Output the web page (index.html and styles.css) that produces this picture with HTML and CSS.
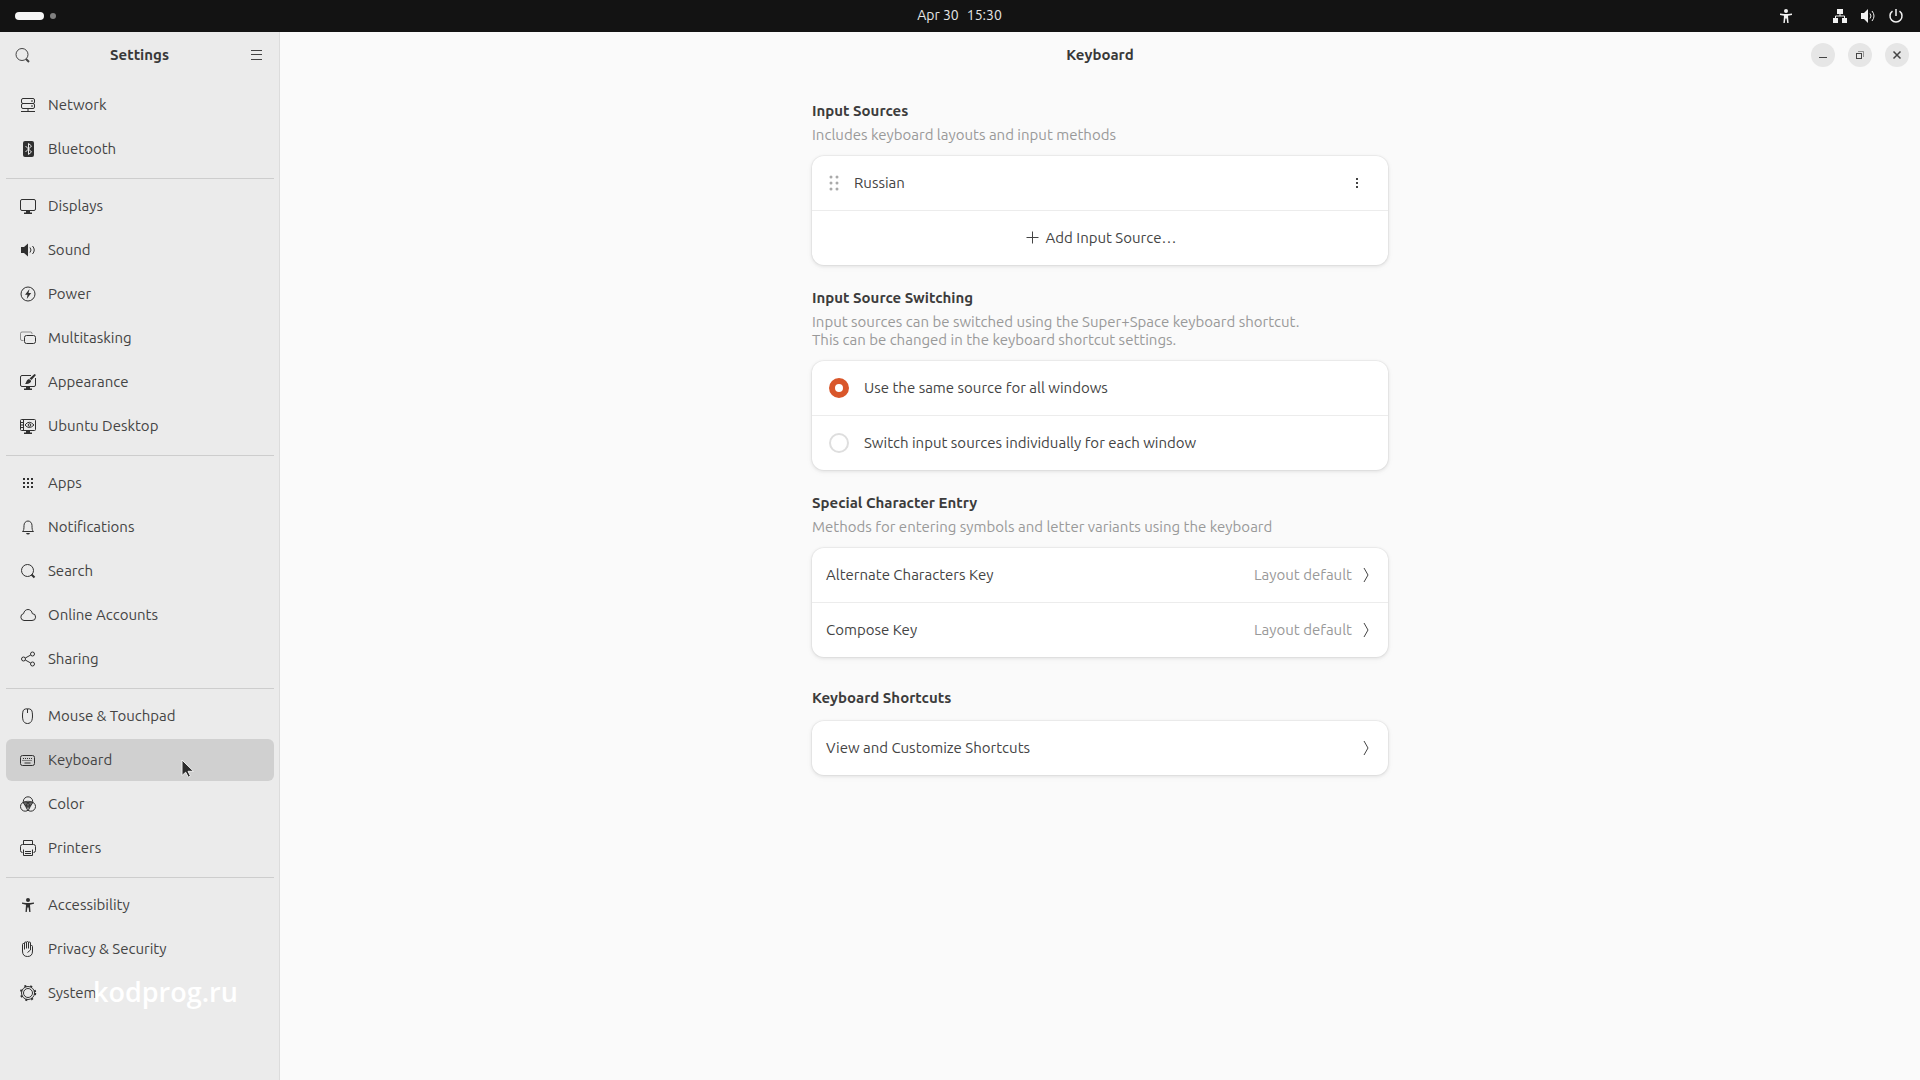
FILE: index.html
```html
<!doctype html>
<html lang="en">
  <head>
    <meta charset="utf-8">
    <title>Settings - Keyboard</title>
    <link rel="stylesheet" href="styles.css">
  </head>
  <body>
    <div class="topbar">
      <div class="workspaces"><span class="workspace-active"></span><span class="workspace-dot"></span></div>
      <div class="clock"><span>Apr 30</span><span>15:30</span></div>
      <div class="status-icons">
        <svg class="icon status-access" viewBox="0 0 16 16"><circle class="fill" cx="8" cy="3" r="2"/><path class="fill" d="M2 5.500l4 .5h4l4-.5v1.400l-4 .8.6 7.300H9.200l-.6-4.500H7.400L6.800 15H5.400L6 7.700l-4-.8z"/></svg>
        <svg class="icon" viewBox="0 0 16 16"><path class="fill" d="M5 1h6v5H5zM1 10h5v5H1zM10 10h5v5h-5z"/><path d="M8 6v2M3.500 10V8h9v2"/></svg>
        <svg class="icon" viewBox="0 0 16 16"><path class="fill" d="M1 5h3l4-4v14l-4-4H1z"/><path d="M10 5.500q2 2.500 0 5M12 3q4 5 0 10"/></svg>
        <svg class="icon power" viewBox="0 0 16 16"><path d="M4.500 3.200a6 6 0 1 0 7 0M8 1v7"/></svg>
      </div>
    </div>

    <div class="window">
      <aside class="sidebar">
        <header class="sidebar-header">
          <button class="flat-button" aria-label="Search"><svg class="icon" viewBox="0 0 16 16"><circle cx="8" cy="7.500" r="6"/><path class="heavy" d="M12 12l3 3"/></svg></button>
          <h1 class="title">Settings</h1>
          <button class="flat-button" aria-label="Menu"><svg class="icon" viewBox="0 0 16 16"><path d="M2 3.500h11M2 7.500h11M2 12.500h11"/></svg></button>
        </header>

        <nav class="nav">
          <ul class="nav-group">
            <li><a class="nav-item" href="#network"><svg class="icon" viewBox="0 0 16 16"><rect x="1.500" y="1.500" width="13" height="5" rx="1.500"/><rect x="1.500" y="6.500" width="13" height="5" rx="1.500"/><path d="M11 4h2M11 9h2M1 14.500h14M8 12v2"/></svg>Network</a></li>
            <li><a class="nav-item" href="#bluetooth"><svg class="icon" viewBox="0 0 16 16"><rect class="fill" x="3" y="0" width="11" height="16" rx="2"/><path class="light" d="M5.500 5l6 6-3 2.500v-11l3 2.500-6 6"/></svg>Bluetooth</a></li>
          </ul>
          <ul class="nav-group">
            <li><a class="nav-item" href="#displays"><svg class="icon" viewBox="0 0 16 16"><rect x=".5" y="1.500" width="15" height="11" rx="1.500"/><path class="fill" d="M6 13h4v1.500h2V16H4v-1.500h2z"/></svg>Displays</a></li>
            <li><a class="nav-item" href="#sound"><svg class="icon" viewBox="0 0 16 16"><path class="fill" d="M1 5h3l4-3.500v13L4 11H1z"/><path d="M10 5.500q2 2.500 0 5M12.500 4q3.500 4 0 8"/></svg>Sound</a></li>
            <li><a class="nav-item" href="#power"><svg class="icon" viewBox="0 0 16 16"><circle cx="8" cy="8" r="7"/><path class="fill" d="M9.500 3L5 8.700h2.500L6.800 13l4.400-6H8.500z"/></svg>Power</a></li>
            <li><a class="nav-item" href="#multitasking"><svg class="icon" viewBox="0 0 16 16"><path class="faint" d="M3.500 10.500H2A1.500 1.500 0 0 1 .5 9V3.500A1.500 1.500 0 0 1 2 2h8.500A1.500 1.500 0 0 1 12 3.500V4"/><rect x="4.500" y="5.500" width="11" height="8" rx="2"/></svg>Multitasking</a></li>
            <li><a class="nav-item" href="#appearance"><svg class="icon" viewBox="0 0 16 16"><path d="M11 1.500H2A1.500 1.500 0 0 0 .5 3v8A1.500 1.500 0 0 0 2 12.500h12a1.500 1.500 0 0 0 1.500-1.500V4"/><path class="fill" d="M14.500 0L16 1l-4.500 5-2-1.500zM9 5l2.200 1.800C11 9 8.500 10.500 5 10c1.500-1 1-4 4-5zM6 13h4v1.500h2V16H4v-1.500h2z"/></svg>Appearance</a></li>
            <li><a class="nav-item" href="#ubuntu-desktop"><svg class="icon" viewBox="0 0 16 16"><rect x=".5" y="1.500" width="15" height="11" rx="1"/><path d="M3.500 2v10M1 4.500h2M1 7h2M1 9.500h2M5 7q4-5.500 9 0-5 5-9 0z"/><circle cx="9.500" cy="7" r="1.300"/><path class="fill" d="M6 13h4v1.500h2V16H4v-1.500h2z"/></svg>Ubuntu Desktop</a></li>
          </ul>
          <ul class="nav-group">
            <li><a class="nav-item" href="#apps"><svg class="icon" viewBox="0 0 16 16"><path class="fill" d="M3 3h2v2H3zM7 3h2v2H7zM11 3h2v2h-2zM3 7h2v2H3zM7 7h2v2H7zM11 7h2v2h-2zM3 11h2v2H3zM7 11h2v2H7zM11 11h2v2h-2z"/></svg>Apps</a></li>
            <li><a class="nav-item" href="#notifications"><svg class="icon" viewBox="0 0 16 16"><path d="M2.500 12.500c1.300-1 1.500-2.500 1.500-6a4 4.500 0 0 1 8 0c0 3.500.2 5 1.500 6z"/><path class="fill" d="M6 14h4q-.5 1.500-2 1.500T6 14z"/></svg>Notifications</a></li>
            <li><a class="nav-item" href="#search"><svg class="icon" viewBox="0 0 16 16"><circle cx="7.500" cy="7.500" r="6"/><path class="heavy" d="M11.500 11.500l3 3"/></svg>Search</a></li>
            <li><a class="nav-item" href="#online-accounts"><svg class="icon" viewBox="0 0 16 16"><path d="M4 13.500a3.500 3.500 0 0 1-.4-6.900C4 4.200 5.800 2.500 8 2.500s4 1.700 4.300 4.100A3.400 3.400 0 0 1 12 13.500z"/></svg>Online Accounts</a></li>
            <li><a class="nav-item" href="#sharing"><svg class="icon" viewBox="0 0 16 16"><circle cx="3.500" cy="8" r="2"/><circle cx="12.500" cy="3" r="2"/><circle cx="12.500" cy="13" r="2"/><path d="M5.300 7l5.400-3M5.300 9l5.400 3"/></svg>Sharing</a></li>
          </ul>
          <ul class="nav-group">
            <li><a class="nav-item" href="#mouse"><svg class="icon" viewBox="0 0 16 16"><path d="M7.500.8c3.500 0 4.500 1 4.800 4 .7 6-.3 10.700-4.800 10.700S2 10.800 2.700 4.800c.3-3 1.300-4 4.800-4zM7.500 1v4"/></svg>Mouse &amp; Touchpad</a></li>
            <li class="nav-current"><a class="nav-item active" href="#keyboard"><svg class="icon" viewBox="0 0 16 16"><rect x=".5" y="3.500" width="14" height="10" rx="2"/><path class="keys" d="M3 6.500h10M2.500 8.500h10"/><path d="M4.500 11h6"/></svg>Keyboard</a>
              <svg class="cursor" viewBox="0 0 14 20"><path d="M1 1v15.500l3.700-3.300 2.600 5 2.200-1.100-2.500-4.800H12.500z"/></svg>
            </li>
            <li><a class="nav-item" href="#color"><svg class="icon" viewBox="0 0 16 16"><path class="fill soft" d="M3.500 6q4.500-2.500 9 0-.5 5-4.500 7-4-2-4.500-7z"/><circle cx="8" cy="5.500" r="4.700"/><circle cx="5.200" cy="10.500" r="4.700"/><circle cx="10.800" cy="10.500" r="4.700"/></svg>Color</a></li>
            <li><a class="nav-item" href="#printers"><svg class="icon" viewBox="0 0 16 16"><path d="M3.500 4.500v-4h9v4M2.500 12.500Q.5 12.500.5 10.500v-4q0-2 2-2h11q2 0 2 2v4q0 2-2 2M3.500 9.500v6h9v-6M5 11.500h6M5 13.500h6"/></svg>Printers</a></li>
          </ul>
          <ul class="nav-group">
            <li><a class="nav-item" href="#accessibility"><svg class="icon" viewBox="0 0 16 16"><circle class="fill" cx="8" cy="3" r="2"/><path class="fill" d="M2 5.500l4 .5h4l4-.5v1.300l-4 1 .5 7.200H9.200l-.6-4.500H7.400L6.800 15H5.500L6 7.800l-4-1z"/></svg>Accessibility</a></li>
            <li><a class="nav-item" href="#privacy"><svg class="icon" viewBox="0 0 16 16"><path d="M4.500 8.500V3.500q0-1-1-1t-1 1V10q0 5.500 5 5.500t5-5.500V5.500q0-1-1-1t-1 1V9M4.500 7.500V2q0-1 1-1t1 1v5.500M6.500 7V1.500q0-1 1-1t1 1V7M8.500 7.500V2q0-1 1-1t1 1v5.500M10.500 9l-3 2.500"/></svg>Privacy &amp; Security</a></li>
            <li class="nav-current"><a class="nav-item" href="#system"><svg class="icon" viewBox="0 0 16 16"><circle cx="8" cy="8" r="6.500"/><circle cx="8" cy="8" r="4.500"/><circle class="teeth" cx="8" cy="8" r="7.200"/></svg>System</a>
              <span class="watermark">kodprog.ru</span>
            </li>
          </ul>
        </nav>
      </aside>

      <main class="content">
        <header class="content-header">
          <h2 class="title">Keyboard</h2>
          <div class="window-controls">
            <button aria-label="Minimize"><svg class="icon" viewBox="0 0 16 16"><path d="M4 10.500h8"/></svg></button>
            <button aria-label="Restore"><svg class="icon" viewBox="0 0 16 16"><rect x="4.500" y="6.500" width="5" height="5"/><path class="faint" d="M6 4.500h5.500V10"/></svg></button>
            <button aria-label="Close"><svg class="icon close" viewBox="0 0 16 16"><path d="M4.500 4.500l7 7M11.500 4.500l-7 7"/></svg></button>
          </div>
        </header>

        <div class="page">
          <section class="group">
            <h3>Input Sources</h3>
            <p>Includes keyboard layouts and input methods</p>
            <div class="card">
              <div class="row source-row">
                <svg class="icon handle" viewBox="0 0 16 16"><circle cx="5" cy="2" r="1.500"/><circle cx="11" cy="2" r="1.500"/><circle cx="5" cy="8" r="1.500"/><circle cx="11" cy="8" r="1.500"/><circle cx="5" cy="14" r="1.500"/><circle cx="11" cy="14" r="1.500"/></svg>
                <span class="row-label">Russian</span>
                <button class="flat-button" aria-label="Source options"><svg class="icon" viewBox="0 0 16 16"><path class="fill" d="M7 3h2v2H7zM7 7h2v2H7zM7 11h2v2H7z"/></svg></button>
              </div>
              <button class="row add-row"><svg class="icon" viewBox="0 0 16 16"><path d="M8.500 1.500v12M2.500 7.500h12"/></svg>Add Input Source…</button>
            </div>
          </section>

          <section class="group">
            <h3>Input Source Switching</h3>
            <p>Input sources can be switched using the Super+Space keyboard shortcut.<br>This can be changed in the keyboard shortcut settings.</p>
            <div class="card">
              <label class="row radio-row"><input type="radio" name="switching" checked>Use the same source for all windows</label>
              <label class="row radio-row"><input type="radio" name="switching">Switch input sources individually for each window</label>
            </div>
          </section>

          <section class="group">
            <h3>Special Character Entry</h3>
            <p>Methods for entering symbols and letter variants using the keyboard</p>
            <div class="card">
              <a class="row" href="#alternate"><span class="row-label">Alternate Characters Key</span><span class="row-value">Layout default</span><svg class="icon chevron" viewBox="0 0 16 16"><path d="M6 1l4 7-4 7"/></svg></a>
              <a class="row" href="#compose"><span class="row-label">Compose Key</span><span class="row-value">Layout default</span><svg class="icon chevron" viewBox="0 0 16 16"><path d="M6 1l4 7-4 7"/></svg></a>
            </div>
          </section>

          <section class="group shortcuts">
            <h3>Keyboard Shortcuts</h3>
            <div class="card">
              <a class="row" href="#shortcuts"><span class="row-label">View and Customize Shortcuts</span><svg class="icon chevron" viewBox="0 0 16 16"><path d="M6 1l4 7-4 7"/></svg></a>
            </div>
          </section>
        </div>
      </main>
    </div>
  </body>
</html>
```
FILE: styles.css
```css
* {
  box-sizing: border-box;
}
body {
  margin: 0;
  min-height: 100vh;
  display: flex;
  flex-direction: column;
  font-family: Ubuntu, "Noto Sans", sans-serif;
  font-size: 15px;
  line-height: 18px;
  color: #444;
  background-color: #fafafa;
}
h1, h2, h3, p, ul {
  margin: 0;
  padding: 0;
}
ul {
  list-style: none;
}
a {
  color: inherit;
  text-decoration: none;
}
button {
  border: none;
  padding: 0;
  background: none;
  font: inherit;
  color: inherit;
}
.icon {
  width: 16px;
  height: 16px;
  flex: none;
  display: block;
  overflow: visible;
  fill: none;
  stroke: currentColor;
  stroke-width: 1;
}
.icon .fill {
  fill: currentColor;
  stroke: none;
}
.icon .light {
  stroke: #ebebeb;
}
.icon .faint {
  opacity: 0.5;
}
.icon .soft {
  opacity: 0.7;
}
.icon .heavy {
  stroke-width: 2;
}
.icon .keys {
  stroke-dasharray: 1 1;
}
.icon .teeth {
  stroke-width: 2;
  stroke-dasharray: 2 4;
}

/* top bar */
.topbar {
  height: 32px;
  padding: 0 16px 0 15px;
  display: grid;
  grid-template-columns: 1fr auto 1fr;
  align-items: center;
  font-size: 14px;
  background-color: #131313;
  color: #e6e6e6;
}
.workspaces {
  display: flex;
  align-items: center;
  gap: 6px;
}
.workspace-active {
  width: 29px;
  height: 8px;
  border-radius: 4px;
  background-color: #f6f6f6;
}
.workspace-dot {
  width: 6px;
  height: 6px;
  border-radius: 50%;
  background-color: #808080;
}
.clock {
  padding-bottom: 2px;
  display: flex;
  gap: 8px;
}
.status-icons {
  display: flex;
  justify-content: flex-end;
  gap: 12px;
  color: #f2f2f2;
}
.status-access {
  margin-right: 26px;
}
.power {
  stroke-width: 1.500;
}

/* window */
.window {
  flex: 1;
  display: flex;
}
.sidebar {
  flex: 0 0 280px;
  border-right: 1px solid #dcdcdc;
  background-color: #ebebeb;
}
.sidebar-header {
  height: 46px;
  padding: 0 14px;
  display: flex;
  align-items: center;
  justify-content: space-between;
}
.title {
  font-size: 15px;
  font-weight: bold;
  color: #383838;
}
.nav {
  padding: 6px 5px 6px 6px;
}
.nav-group {
  display: flex;
  flex-direction: column;
  gap: 2px;
}
.nav-group + .nav-group {
  margin-top: 8px;
  padding-top: 6px;
  border-top: 1px solid #cdcdcd;
}
.nav-item {
  height: 42px;
  padding-left: 14px;
  display: flex;
  align-items: center;
  gap: 12px;
  border-radius: 6px;
}
.nav-item .icon {
  color: #303030;
}
.nav-item.active {
  background-color: #d0d0d0;
}
.nav-current {
  position: relative;
}
.cursor {
  position: absolute;
  left: 175px;
  top: 20px;
  width: 14px;
  height: 20px;
  fill: #2b2b2b;
  stroke: #f0f0f0;
}
.watermark {
  position: absolute;
  left: 87px;
  top: 2px;
  font-family: "Open Sans", sans-serif;
  font-size: 27px;
  font-weight: 600;
  line-height: 36px;
  color: #fff;
  pointer-events: none;
}

/* content */
.content {
  flex: 1;
}
.content-header {
  height: 46px;
  padding: 0 11px;
  display: grid;
  grid-template-columns: 1fr auto 1fr;
  align-items: center;
}
.content-header .title {
  grid-column: 2;
}
.window-controls {
  display: flex;
  justify-content: flex-end;
  gap: 13px;
}
.window-controls button {
  width: 24px;
  height: 24px;
  display: flex;
  align-items: center;
  justify-content: center;
  border-radius: 50%;
  background-color: #e6e6e6;
}
.close {
  stroke-width: 1.500;
}
.page {
  max-width: 576px;
  margin: 0 auto;
  padding: 24px 0;
  display: flex;
  flex-direction: column;
  gap: 24px;
}
.group h3 {
  margin-bottom: 6px;
  font-size: 15px;
  font-weight: bold;
  color: #3c3c3c;
}
.group p {
  margin-bottom: 12px;
  color: #999;
}
.shortcuts {
  padding-top: 8px;
}
.shortcuts h3 {
  margin-bottom: 14px;
}
.card {
  border-radius: 12px;
  background-color: #fff;
  box-shadow: 0 0 0 1px rgba(0, 0, 0, 0.03), 0 1px 3px 1px rgba(0, 0, 0, 0.07), 0 2px 6px 2px rgba(0, 0, 0, 0.02);
}
.row {
  width: 100%;
  height: 54px;
  padding: 0 14px;
  display: flex;
  align-items: center;
}
.row + .row {
  height: 55px;
  border-top: 1px solid #ececec;
}
.row-label {
  flex: 1;
}
.row-value {
  margin-right: 6px;
  color: #999;
}
.source-row {
  padding-right: 23px;
}
.handle {
  margin-right: 12px;
  fill: #aaa;
  stroke: none;
}
.add-row {
  justify-content: center;
  gap: 6px;
}
.radio-row {
  padding-left: 17px;
  gap: 15px;
}
.radio-row input {
  appearance: none;
  width: 20px;
  height: 20px;
  margin: 0;
  border: 2px solid #dedede;
  border-radius: 50%;
  background-color: #fff;
}
.radio-row input:checked {
  border: 6px solid #d9562a;
}
```
